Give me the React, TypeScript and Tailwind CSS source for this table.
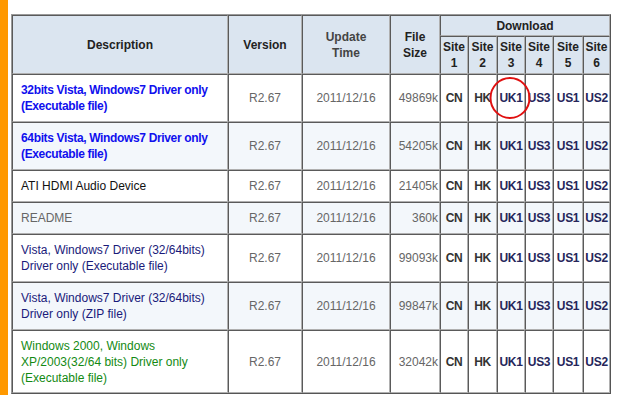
const rows = [
  { lines: ["32bits Vista, Windows7 Driver only", "(Executable file)"], color: "text-[#1010ee] font-bold tracking-[-0.35px]", size: "49869k", h: "h-[48px]" },
  { lines: ["64bits Vista, Windows7 Driver only", "(Executable file)"], color: "text-[#1010ee] font-bold tracking-[-0.35px]", size: "54205k", h: "h-[48px]" },
  { lines: ["ATI HDMI Audio Device"], color: "text-[#111]", size: "21405k", h: "h-[32px]" },
  { lines: ["README"], color: "text-[#666]", size: "360k", h: "h-[32px]" },
  { lines: ["Vista, Windows7 Driver (32/64bits)", "Driver only (Executable file)"], color: "text-[#1a1a7a]", size: "99093k", h: "h-[48px]" },
  { lines: ["Vista, Windows7 Driver (32/64bits)", "Driver only (ZIP file)"], color: "text-[#1a1a7a]", size: "99847k", h: "h-[48px]" },
  { lines: ["Windows 2000, Windows", "XP/2003(32/64 bits) Driver only", "(Executable file)"], color: "text-[#138a13]", size: "32042k", h: "h-[63px]" },
];

const sites = ["CN", "HK", "UK1", "US3", "US1", "US2"];

const TD = "border border-t-[#5a5a5a] border-l-[#5a5a5a] border-r-[#b0b0b0] border-b-[#b0b0b0] p-0";
const TH = TD + " bg-[#dbe5f0] font-bold text-[#222] text-center align-middle";

export default function App() {
  return (
    <div className="flex min-h-[395px] w-[622px] bg-white font-['Liberation_Sans',Arial,sans-serif] text-[12px] leading-[16px]">
      <div className="w-[8px] shrink-0 bg-[#ff9900]" />
      <div className="pl-[3px] pt-[14px]">
        <div className="relative">
          <table className="w-[600px] table-fixed border-separate border-spacing-0 border border-t-[#9a9a9a] border-l-[#9a9a9a] border-r-[#555] border-b-[#555]">
            <colgroup>
              <col className="w-[216px]" />
              <col className="w-[74px]" />
              <col className="w-[88px]" />
              <col className="w-[50px]" />
              <col className="w-[28px]" />
              <col className="w-[29px]" />
              <col className="w-[28px]" />
              <col className="w-[28px]" />
              <col className="w-[30px]" />
              <col className="w-[27px]" />
            </colgroup>
            <thead>
              <tr className="h-[21px]">
                <th rowSpan={2} className={TH}>Description</th>
                <th rowSpan={2} className={TH}>Version</th>
                <th rowSpan={2} className={TH + " text-[#444]"}>Update<br />Time</th>
                <th rowSpan={2} className={TH}>File<br />Size</th>
                <th colSpan={6} className={TH}>Download</th>
              </tr>
              <tr className="h-[38px]">
                {[1, 2, 3, 4, 5, 6].map((n) => (
                  <th key={n} className={TH}>Site<br />{n}</th>
                ))}
              </tr>
            </thead>
            <tbody>
              {rows.map((r, i) => (
                <tr key={i} className={`${r.h} ${i % 2 === 1 ? "bg-[#f3f7fb]" : "bg-white"}`}>
                  <td className={`${TD} whitespace-nowrap px-[8px] ${r.color}`}>
                    {r.lines.map((l, k) => (
                      <div key={k}>{l}</div>
                    ))}
                  </td>
                  <td className={`${TD} text-center text-[#666]`}>R2.67</td>
                  <td className={`${TD} text-center text-[#666]`}>2011/12/16</td>
                  <td className={`${TD} pr-[1px] text-right text-[#666]`}>{r.size}</td>
                  {sites.map((s, j) => (
                    <td key={s} className={`${TD} text-center font-bold tracking-[-0.3px] ${j < 2 ? "text-[#333]" : "text-[#26265a]"}`}>{s}</td>
                  ))}
                </tr>
              ))}
            </tbody>
          </table>
          <svg className="pointer-events-none absolute left-[477px] top-[62px]" width="44" height="44" viewBox="0 0 44 44">
            <ellipse cx="22" cy="22" rx="19.5" ry="20" fill="none" stroke="#e01010" strokeWidth="2" />
          </svg>
        </div>
      </div>
    </div>
  );
}
